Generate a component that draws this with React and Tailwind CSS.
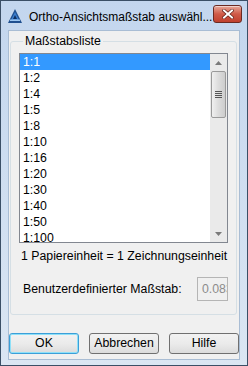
import React from "react";

const scales = [
  "1:1",
  "1:2",
  "1:4",
  "1:5",
  "1:8",
  "1:10",
  "1:16",
  "1:20",
  "1:30",
  "1:40",
  "1:50",
  "1:100",
];

function AppIcon() {
  return (
    <svg width="16" height="16" viewBox="0 0 16 16">
      <polygon points="8,1 15,15 1,15" fill="#1f4f8f" />
      <polygon points="8,4 12.5,13 3.5,13" fill="#3b7fd0" />
      <polygon points="8,7 10,11 6,11" fill="#0e2f60" />
      <rect x="3" y="11.5" width="10" height="1.5" fill="#9cc6f0" />
    </svg>
  );
}

function CloseButton() {
  return (
    <button className="w-[29px] h-[18px] rounded-[3px] border border-[#6b2a22] bg-gradient-to-b from-[#e6a89a] via-[#cf5a48] to-[#c0402e] flex items-center justify-center shadow-[inset_0_1px_0_rgba(255,255,255,0.5)]">
      <svg width="12" height="10" viewBox="0 0 12 10">
        <path d="M2 1.5 L10 8.5 M10 1.5 L2 8.5" stroke="#5a1a12" strokeWidth="3.2" strokeLinecap="square" />
        <path d="M2 1.5 L10 8.5 M10 1.5 L2 8.5" stroke="#ffffff" strokeWidth="2" strokeLinecap="square" />
      </svg>
    </button>
  );
}

function ScrollBar() {
  return (
    <div className="w-[17px] h-full bg-[#eaeaea] flex flex-col items-center">
      <div className="h-[17px] w-full flex items-center justify-center">
        <svg width="7" height="4" viewBox="0 0 7 4">
          <polygon points="3.5,0 7,4 0,4" fill="#7a7a7a" />
        </svg>
      </div>
      <div className="w-[15px] h-[47px] rounded-[2px] border border-[#9a9a9a] bg-gradient-to-r from-[#f0f0f0] via-[#dcdcdc] to-[#cdcdcd] flex flex-col items-center justify-center gap-[1px]">
        <div className="w-[7px] h-[1px] bg-[#555]" />
        <div className="w-[7px] h-[1px] bg-[#555]" />
        <div className="w-[7px] h-[1px] bg-[#555]" />
        <div className="w-[7px] h-[1px] bg-[#555]" />
      </div>
      <div className="flex-1" />
      <div className="h-[17px] w-full flex items-center justify-center">
        <svg width="7" height="4" viewBox="0 0 7 4">
          <polygon points="0,0 7,0 3.5,4" fill="#7a7a7a" />
        </svg>
      </div>
    </div>
  );
}

export default function App() {
  return (
    <div className="w-[248px] h-[366px] border border-[#3b4f66] bg-gradient-to-b from-[#c3d6ee] to-[#dbe6f3] flex flex-col font-['Liberation_Sans',Arial,sans-serif] text-[12px] text-black overflow-hidden">
      {/* title bar */}
      <div className="h-[29px] flex items-center pl-[6px] pr-[5px] shrink-0">
        <AppIcon />
        <span className="ml-[6px] mt-[3px] text-[12px] text-black whitespace-nowrap">
          Ortho-Ansichtsmaßstab auswähl...
        </span>
        <div className="ml-auto -mt-[3px]">
          <CloseButton />
        </div>
      </div>

      {/* client area */}
      <div className="mx-[7px] mb-[5px] flex-1 bg-[#f0f0f0] border border-[#a9bdd4] flex flex-col text-[12.3px]">
        <fieldset className="ml-[1px] mr-[2px] mt-[3px] h-[281px] border border-[#d5dfe5] rounded-[3px] px-[8px] pb-0 pt-0">
          <legend className="px-[2px] ml-[4px] leading-[15px]">Maßstabsliste</legend>
          <div className="mt-[4px] h-[190px] border border-[#828790] bg-white flex">
            <div className="flex-1 overflow-hidden">
              {scales.map((s, i) => (
                <div
                  key={s}
                  className={
                    i === 0
                      ? "h-[16px] leading-[16px] pl-[3px] bg-[#3399ff] text-white"
                      : "h-[16px] leading-[16px] pl-[3px]"
                  }
                >
                  {s}
                </div>
              ))}
            </div>
            <ScrollBar />
          </div>
          <p className="mt-[6px] pl-[2px] leading-[15px]">
            1 Papiereinheit = 1 Zeichnungseinheit
          </p>
          <div className="mt-[13px] flex items-center">
            <span className="pl-[4px]">Benutzerdefinierter Maßstab:</span>
            <div className="ml-auto w-[31px] h-[24px] border border-[#b5b5b5] bg-[#f0f0f0] overflow-hidden flex items-center">
              <span className="pl-[4px] text-[#8c8c8c] whitespace-nowrap">0.0833</span>
            </div>
          </div>
        </fieldset>

        <div className="mt-[18px] flex gap-[10px]">
          <button className="w-[70px] h-[21px] rounded-[3px] border border-[#3c9fd8] bg-gradient-to-b from-[#f2f2f2] via-[#ebebeb] to-[#dcdcdc] shadow-[inset_0_0_0_1px_#8ee0f8]">
            OK
          </button>
          <button className="w-[70px] h-[21px] rounded-[3px] border border-[#707070] bg-gradient-to-b from-[#f2f2f2] via-[#ebebeb] to-[#dcdcdc]">
            Abbrechen
          </button>
          <button className="w-[70px] h-[21px] rounded-[3px] border border-[#707070] bg-gradient-to-b from-[#f2f2f2] via-[#ebebeb] to-[#dcdcdc]">
            Hilfe
          </button>
        </div>
      </div>
    </div>
  );
}
